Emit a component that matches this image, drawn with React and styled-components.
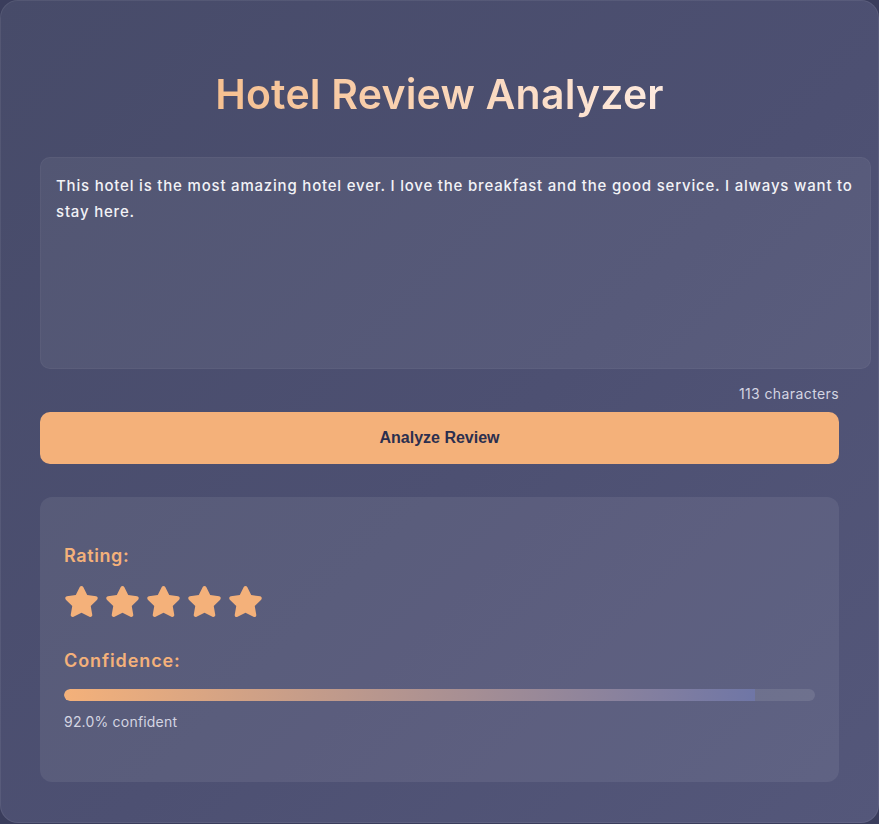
import React, { useState } from 'react';
import styled, { createGlobalStyle } from 'styled-components';
import { FaStar } from 'react-icons/fa';

const GlobalStyle = createGlobalStyle`
  html, body {
    margin: 0;
    padding: 0;
    background: #3a3d5c;
  }
  body {
    font-family: "Inter", "Noto Sans", sans-serif;
  }
`;

const Card = styled.div`
  box-sizing: border-box;
  width: 879px;
  min-height: 823px;
  padding: 40px;
  border-radius: 18px;
  box-shadow: inset 0 0 0 1px rgba(255, 255, 255, 0.07);
  background: linear-gradient(135deg, #474b69 0%, #4d5072 55%, #54577a 100%);
`;

const Title = styled.h1`
  margin: 24px auto 33px;
  width: fit-content;
  font-size: 41px;
  line-height: 60px;
  font-weight: 600;
  letter-spacing: 0.2px;
  text-align: center;
  background: linear-gradient(90deg, #f6c090 0%, #fde9de 100%);
  -webkit-background-clip: text;
  background-clip: text;
  color: transparent;
`;

const ReviewInput = styled.textarea`
  display: block;
  width: 100%;
  height: 180px;
  padding: 15px;
  border: 1px solid rgba(255, 255, 255, 0.04);
  border-radius: 10px;
  background: rgba(255, 255, 255, 0.06);
  color: #f2f2f6;
  font-family: "Inter", "Noto Sans", sans-serif;
  font-size: 15px;
  font-weight: 500;
  line-height: 26px;
  letter-spacing: 0.8px;
  resize: none;
  outline: none;
`;

const CharCount = styled.div`
  margin: 15px 0 8px;
  text-align: right;
  font-size: 14px;
  line-height: 20px;
  letter-spacing: 0.4px;
  color: #d4d5e2;
`;

const AnalyzeButton = styled.button`
  display: block;
  width: 100%;
  height: 52px;
  border: none;
  border-radius: 10px;
  background: #f4b17a;
  color: #2b2f4f;
  font-family: "Liberation Sans", Arial, sans-serif;
  font-weight: 700;
  font-size: 16px;
  cursor: pointer;
`;

const ResultCard = styled.div`
  margin-top: 33px;
  padding: 45px 24px 50px;
  border-radius: 12px;
  background: rgba(255, 255, 255, 0.075);
`;

const Label = styled.h3`
  margin: 0;
  font-size: 18px;
  line-height: 28px;
  font-weight: 600;
  letter-spacing: ${({ $spacing }) => $spacing || '0.6px'};
  color: #f4b17a;
`;

const Stars = styled.div`
  display: flex;
  gap: 6px;
  margin: 14px 0 28px;
  color: #f4b17a;
`;

const Track = styled.div`
  margin-top: 14px;
  height: 12px;
  border-radius: 6px;
  background: rgba(255, 255, 255, 0.1);
  overflow: hidden;
`;

const Fill = styled.div`
  height: 100%;
  border-radius: 6px 0 0 6px;
  background: linear-gradient(90deg, #f4b17a 0%, #6f76a6 100%);
`;

const ConfidenceText = styled.div`
  margin-top: 11px;
  font-size: 14px;
  line-height: 20px;
  letter-spacing: 0.2px;
  color: #d4d5e2;
`;

export default function App() {
  const [review, setReview] = useState(
    'This hotel is the most amazing hotel ever. I love the breakfast and the good service. I always want to stay here.'
  );
  const rating = 5;
  const confidence = 0.92;

  return (
    <>
      <GlobalStyle />
      <Card>
        <Title>Hotel Review Analyzer</Title>
        <ReviewInput value={review} onChange={(e) => setReview(e.target.value)} />
        <CharCount>{review.length} characters</CharCount>
        <AnalyzeButton>Analyze Review</AnalyzeButton>
        <ResultCard>
          <Label>Rating:</Label>
          <Stars>
            {Array.from({ length: rating }).map((_, i) => (
              <FaStar key={i} size={35} />
            ))}
          </Stars>
          <Label $spacing="0.9px">Confidence:</Label>
          <Track>
            <Fill style={{ width: `${confidence * 100}%` }} />
          </Track>
          <ConfidenceText>{(confidence * 100).toFixed(1)}% confident</ConfidenceText>
        </ResultCard>
      </Card>
    </>
  );
}
